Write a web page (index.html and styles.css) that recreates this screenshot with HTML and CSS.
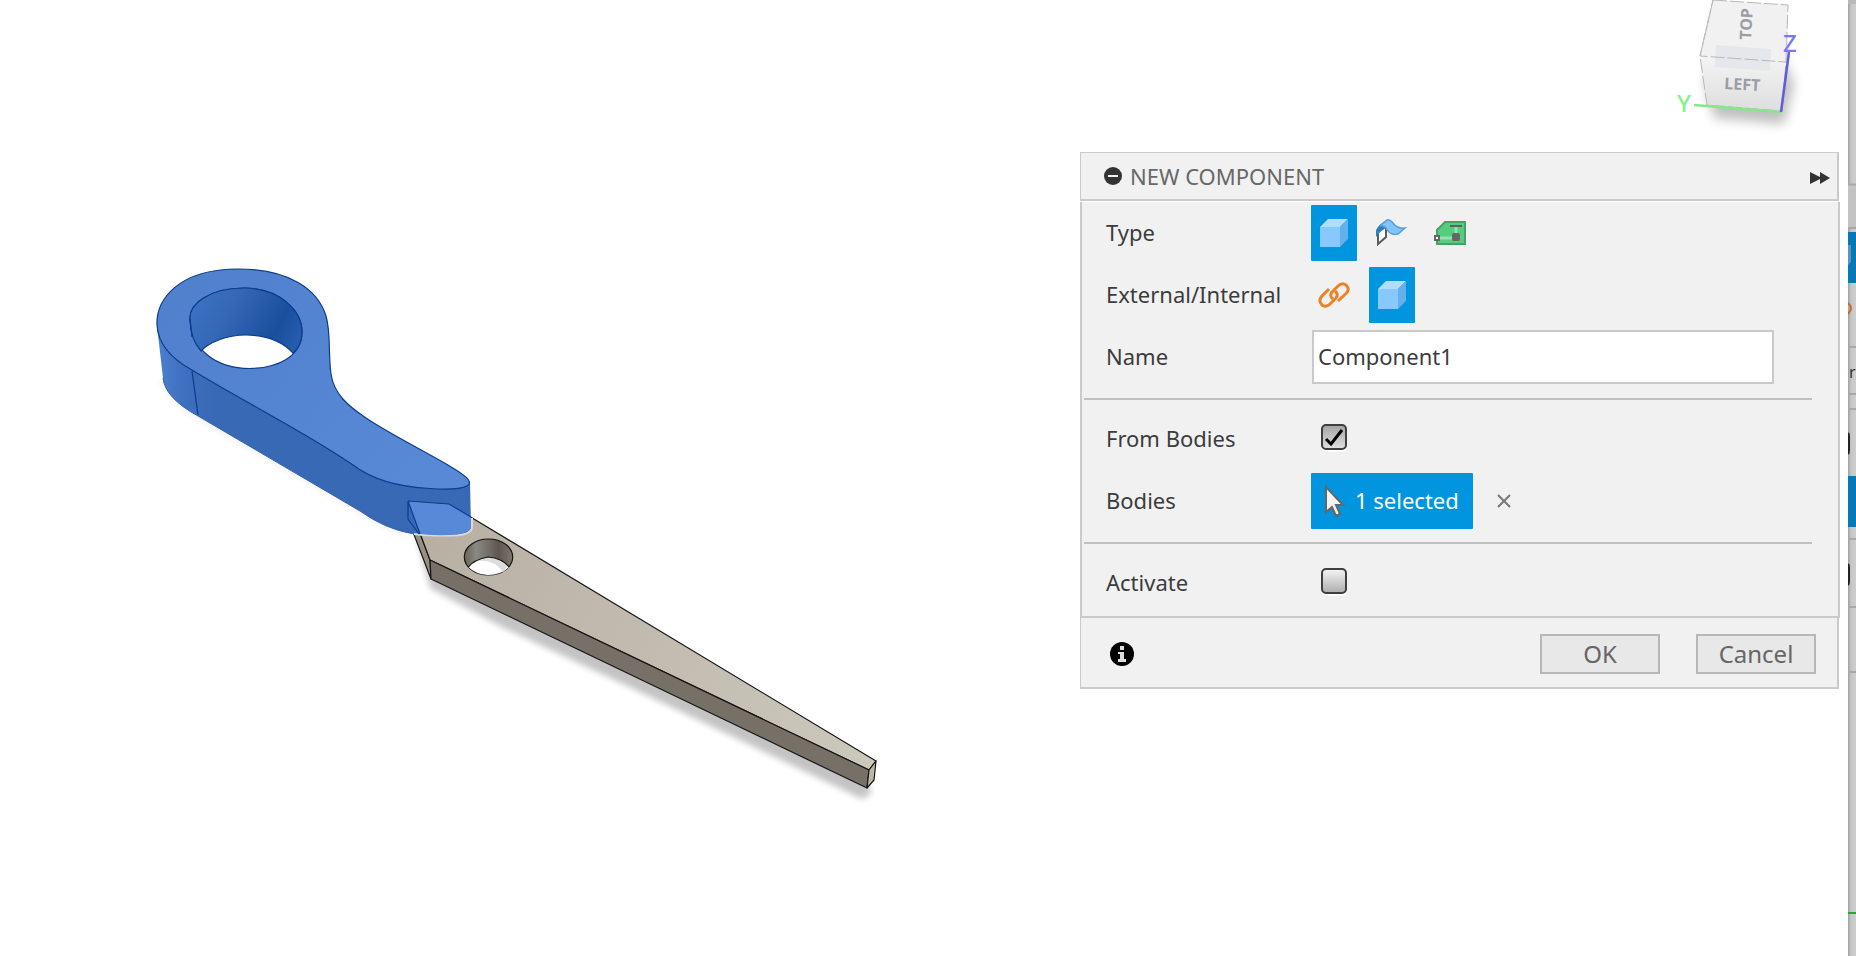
FILE: index.html
```html
<!DOCTYPE html>
<html lang="en">

<head>
    <meta charset="UTF-8">
    <meta name="viewport" content="width=device-width, initial-scale=1.0">
    <title>New Component</title>
    <link rel="stylesheet" href="styles.css">
</head>

<body>

    <!-- shared icon -->
    <svg class="defs" width="0" height="0" aria-hidden="true">
        <symbol id="cube" viewBox="0 0 28 28">
            <path d="M0 8H20V28H0Z" fill="#87c9fd"/>
            <path d="M0 8L8 0H28L20 8Z" fill="#b0deff"/>
            <path d="M20 8L28 0V20L20 28Z" fill="#64b0ea"/>
        </symbol>
    </svg>

    <main class="viewport">
        <!-- scissors half: handle body + blade body -->
        <svg class="model" viewBox="140 250 760 560" role="img" aria-label="Scissors model">
            <defs>
                <filter id="soft" x="-10%" y="-10%" width="120%" height="120%">
                    <feGaussianBlur stdDeviation="3"/>
                </filter>
                <linearGradient id="hole" gradientUnits="userSpaceOnUse" x1="190" y1="290" x2="302" y2="350">
                    <stop offset="0" stop-color="#3d74c4"/>
                    <stop offset=".35" stop-color="#3468b6"/>
                    <stop offset=".75" stop-color="#1a4f9e"/>
                    <stop offset="1" stop-color="#2a60b4"/>
                </linearGradient>
                <linearGradient id="pin" x1="0" y1="0" x2="1" y2="0">
                    <stop offset="0" stop-color="#69645c"/>
                    <stop offset=".25" stop-color="#8a8983"/>
                    <stop offset=".7" stop-color="#5e5750"/>
                    <stop offset="1" stop-color="#7d766c"/>
                </linearGradient>
                <linearGradient id="side" gradientUnits="userSpaceOnUse" x1="157" y1="0" x2="215" y2="0">
                    <stop offset="0" stop-color="#4c80ce"/>
                    <stop offset=".5" stop-color="#3c6fbf"/>
                    <stop offset="1" stop-color="#3869b5"/>
                </linearGradient>
                <linearGradient id="steel" gradientUnits="userSpaceOnUse" x1="420" y1="510" x2="870" y2="770">
                    <stop offset="0" stop-color="#b8afa2"/>
                    <stop offset="1" stop-color="#cbc8bc"/>
                </linearGradient>
                <linearGradient id="top" gradientUnits="userSpaceOnUse" x1="200" y1="270" x2="440" y2="480">
                    <stop offset="0" stop-color="#5181cd"/>
                    <stop offset="1" stop-color="#5889d7"/>
                </linearGradient>
            </defs>

            <path d="M414 528L430 588L500 626L640 692L862 799L872 793L860 770L431 565Z" fill="#000" opacity=".23" filter="url(#soft)"/>
            <path d="M162 380Q172 402 198 417L360 510Q385 528 408 533" fill="none" stroke="#000" stroke-width="3" opacity=".1" filter="url(#soft)"/>

            <g stroke="#161616" stroke-linejoin="round" stroke-width="1.2">
                <path d="M408 501L430 560L431 579L408 519Z" fill="#988f82"/>
                <path d="M408 501L449 504L876 761L869 770L430 560Z" fill="url(#steel)"/>
                <path d="M430 560L869 770L867 788L431 579Z" fill="#767067"/>
                <path d="M869 770L876 761L874 780L867 788Z" fill="#bdb8aa"/>
                <ellipse cx="488.500" cy="557" rx="24.200" ry="18" fill="url(#pin)"/>
            </g>
            <path d="M468.500 567Q473 560 488 557Q502 558 509 567Q501 575 488 575Q475 574 468.500 567Z" fill="#fff"/>
            <path d="M478 561Q494 559 503 572L507 567Q500 557 488 557Z" fill="#ddd"/>
            <path d="M468.500 567Q473 560 488 557Q502 558 509 567" fill="none" stroke="#161616" stroke-width="1.200"/>

            <!-- handle side wall -->
            <path d="M157 326L163 378Q165 398 198 416L360 511Q392 534 430 536Q472 537 471 527L470 482L400 470L330 400L195 362Z" fill="url(#side)"/>
            <path d="M414 534Q430 536 452 535.500Q472 535 472 527V518" fill="none" stroke="#dcdad8" stroke-width="2"/>
            <path d="M408 501L449 504L471 517V527Q471 532 458 534.500Q436 536 420 534Z" fill="#5789d8"/>
            <path d="M419 534L408 519V501L420 534M408 501L449 504L471 517" fill="none" stroke="#0b3c8e" stroke-width="1.200"/>
            <path d="M163 378Q165 398 198 416L360 511Q385 529 412 533.500" fill="none" stroke="#3a62a0" stroke-width="1"/>

            <!-- handle top face with finger hole -->
            <path fill-rule="evenodd" d="M157 325C156 300 178 269 238 269C290 269 318 290 326 316C331 333 328 352 331 374C334 394 348 406 366 418C400 441 466 471 469 481C473 489 449 490 430 488.500C400 487 374 481 353 465C310 435 248 404 192 370C172 359 158 345 157 325Z
                M190 319C189 305 208 288 244 288C280 288 302 311 302 332C302 357 277 368 250 368.500C215 368 192 350 190 319Z" fill="url(#top)" stroke="#0b3c8e" stroke-width="1.200"/>
            <path d="M190 319C189 305 208 288 244 288C280 288 302 311 302 332C302 342 298 349 293 353C280 339 262 335 246 335C226 335 208 343 201 351C193 342 190 331 190 319Z" fill="url(#hole)" stroke="#0b3c8e" stroke-width="1.200"/>
            <path d="M190 319L192 337M192 371L198 415" fill="none" stroke="#0b3c8e" stroke-width="1.200"/>
        </svg>

        <!-- view cube -->
        <svg class="viewcube" viewBox="0 0 160 140" role="img" aria-label="View cube">
            <defs>
                <filter id="glow" x="-30%" y="-30%" width="160%" height="160%">
                    <feGaussianBlur stdDeviation="6"/>
                </filter>
                <linearGradient id="front" x1="0" y1="0" x2="0" y2="1">
                    <stop offset="0" stop-color="#f4f4f4"/>
                    <stop offset="1" stop-color="#dedede"/>
                </linearGradient>
            </defs>
            <path d="M24 76L34 118L104 124L114 84L104 60Z" opacity=".25" filter="url(#glow)"/>
            <path d="M33 0L108 5L106 62L20 56Z" fill="#f1f1f1"/>
            <path d="M20 56L106 62L102 111L27 105Z" fill="url(#front)"/>
            <path d="M36 45L91 49L90 71L35 67Z" fill="#e5e7eb"/>
            <path d="M33 0L108 5L106 62L102 111L27 105L20 56ZM33 0L20 56L106 62" fill="none" stroke="#b8b8b8" stroke-width="1" stroke-dasharray="14 3"/>
            <path d="M14 105L101 112" stroke="#83ea83" stroke-width="2.500"/>
            <path d="M109 52L101 112" stroke="#605cdc" stroke-width="2.500"/>
            <text class="face" transform="translate(44 89) rotate(3)">LEFT</text>
            <text class="face" transform="translate(71 40) rotate(-87)">TOP</text>
            <text class="axis axis-y" x="-3" y="112">Y</text>
            <text class="axis axis-z" x="103" y="52">Z</text>
        </svg>

        <form class="dialog" action="#">
            <header class="dialog-header">
                <svg width="18" height="18" viewBox="0 0 18 18" aria-hidden="true">
                    <circle cx="9" cy="9" r="9" fill="#333"/>
                    <path d="M4 9H14" stroke="#f1f1f1" stroke-width="2"/>
                </svg>
                <h1>NEW COMPONENT</h1>
                <button class="plain expand" type="button" aria-label="Expand">
                    <svg width="20" height="12" viewBox="0 0 20 12"><path d="M0 0L10 5V0L20 6L10 12V7L0 12Z" fill="#333"/></svg>
                </button>
            </header>

            <div class="dialog-body">
                <div class="row">
                    <span class="label">Type</span>
                    <div class="field types">
                        <button class="tile selected" type="button" aria-label="Standard"><svg width="28" height="28"><use href="#cube"/></svg></button>
                        <button class="tile" type="button" aria-label="Sheet metal">
                            <svg width="32" height="28" viewBox="0 0 32 28">
                                <path d="M2 13L10 7V18L2 25Z" fill="#fff" stroke="#5d5d5d" stroke-width="2"/>
                                <path d="M0 18V11Q3 5 11 1L12 8Q6 10 0 18Z" fill="#2d80bf"/>
                                <path d="M4 7L11 1Q14 0 17 4Q21 10 29 9L22 15Q14 17 10 9Q8 6 4 7Z" fill="#80c4fb" stroke="#5a9fd7" stroke-width="1.500"/>
                            </svg>
                        </button>
                        <button class="tile" type="button" aria-label="Electronics">
                            <svg width="32" height="24" viewBox="0 0 32 24">
                                <path d="M3 23V9L11 1H31V23Z" fill="#57cc7e" stroke="#45a365" stroke-width="2"/>
                                <path d="M22 6V14M6 17H18" stroke="#95e0ae" stroke-width="3"/>
                                <path d="M16 5H28" stroke="#5f5f5f" stroke-width="2"/>
                                <rect x="18" y="12" width="8" height="8" rx="2" fill="#666"/>
                                <rect x="1" y="15" width="4" height="4" fill="#fff" stroke="#666" stroke-width="2"/>
                            </svg>
                        </button>
                    </div>
                </div>

                <div class="row">
                    <span class="label">External/Internal</span>
                    <div class="field">
                        <button class="tile" type="button" aria-label="External">
                            <svg width="32" height="26" viewBox="0 0 32 26" fill="none" stroke="#ec8227" stroke-width="3">
                                <path d="M11 7L3.500 14.500Q0 19 4 23Q8 26 12 22L18 16Q21 12 17 9"/>
                                <path d="M20 19L28.500 11Q32 7 28 3Q24 0 20 4L14 10Q11 14 15 17"/>
                            </svg>
                        </button>
                        <button class="tile selected" type="button" aria-label="Internal"><svg width="28" height="28"><use href="#cube"/></svg></button>
                    </div>
                </div>

                <div class="row">
                    <label class="label" for="name">Name</label>
                    <input class="textbox" type="text" name="name" id="name" value="Component1">
                </div>

                <hr>

                <div class="row">
                    <label class="label" for="from-bodies">From Bodies</label>
                    <input class="check" type="checkbox" id="from-bodies" checked>
                </div>

                <div class="row">
                    <span class="label">Bodies</span>
                    <div class="field">
                        <button class="selection" type="button">
                            <svg width="20" height="32" viewBox="0 0 20 32" aria-hidden="true">
                                <path d="M1 2V27L7 22L11 31L15 29L11 20H18Z" fill="#f3f3f3" stroke="#666" stroke-width="2"/>
                            </svg>
                            <span class="label">1 selected</span>
                        </button>
                        <button class="plain clear" type="button" aria-label="Clear selection">
                            <svg width="14" height="14" viewBox="0 0 14 14"><path d="M1 1L13 13M13 1L1 13" stroke="#777" stroke-width="2"/></svg>
                        </button>
                    </div>
                </div>

                <hr>

                <div class="row">
                    <label class="label" for="activate">Activate</label>
                    <input class="check" type="checkbox" id="activate">
                </div>
            </div>

            <footer class="dialog-footer">
                <button class="plain info" type="button" aria-label="Info">
                    <svg width="24" height="24" viewBox="0 0 24 24">
                        <circle cx="12" cy="12" r="12"/>
                        <path d="M10 4H14V8H10ZM8 10H14V17H16V20H8V17H10V12H8Z" fill="#ddd"/>
                    </svg>
                </button>
                <button class="btn" type="submit">OK</button>
                <button class="btn" type="button">Cancel</button>
            </footer>
        </form>
    </main>

    <!-- edge of the window behind -->
    <aside class="behind" aria-hidden="true">
        <svg width="8" height="956" viewBox="0 0 8 956">
            <path d="M0 0H8V4H0Z" fill="#b9b9b9"/>
            <path d="M0 184H8V228H0Z" fill="#c3c3c3"/>
            <path d="M0 184.500H8M0 228H8M0 347H8M0 394H8M0 409H8M0 539H8M0 607H8M0 672H8" stroke="#a8a8a8" stroke-width="2"/>
            <path d="M0 232H8V283H0ZM0 476H8V527H0Z" fill="#0679b5"/>
            <path d="M0 245H3V262L0 265Z" fill="#5b93c4"/>
            <path d="M0 303Q6 308 0 314" fill="none" stroke="#c56a24" stroke-width="2"/>
            <path d="M0 433Q1 434 1 437V450Q1 453 0 454M0 564Q1 565 1 568V581Q1 584 0 585" fill="none" stroke="#222" stroke-width="2"/>
            <text class="behind-text" x="1" y="378">r</text>
            <path d="M0 913H8" stroke="#30a040" stroke-width="2"/>
        </svg>
    </aside>

</body>

</html>
```
FILE: styles.css
```css
* {
    box-sizing: border-box;
}

body {
    margin: 0;
    min-height: 100vh;
    display: flex;
    background-color: white;
    color: #3c3c3c;
    font-family: "Noto Sans", "Open Sans", sans-serif;
    font-size: 22px;
    line-height: 30px;
}

button {
    font: inherit;
    color: inherit;
    padding: 0;
    border: none;
    background: none;
}

svg {
    display: block;
}

.defs {
    position: absolute;
}

/* canvas */
.viewport {
    position: relative;
    flex: 1;
    padding: 250px 0 0 140px;
}

.model {
    width: 760px;
    height: 560px;
}

.viewcube {
    position: absolute;
    top: 0;
    right: 8px;
    width: 160px;
    height: 140px;
    overflow: visible;
}

.face {
    font-size: 16px;
    font-weight: 700;
    fill: #9a9da2;
}

.axis {
    font-size: 24px;
    font-weight: 500;
}

.axis-y {
    fill: #86f286;
}

.axis-z {
    fill: #7b74ff;
}

/* dialog */
.dialog {
    position: absolute;
    top: 152px;
    right: 8px;
    width: 760px;
}

.dialog-header,
.dialog-body,
.dialog-footer {
    background-color: #f1f1f1;
    border: 0 solid #cacaca;
}

.dialog-header {
    display: flex;
    align-items: center;
    gap: 8px;
    height: 49px;
    margin: 0 1px 1px 0;
    padding: 0 7px 0 23px;
    border-width: 1px 2px 2px 1px;
}

h1 {
    margin: 0;
    font-size: 22px;
    font-weight: 400;
    color: #686868;
}

.expand {
    margin-left: auto;
    padding-top: 3px;
}

.dialog-body {
    display: flex;
    flex-direction: column;
    gap: 6px;
    padding: 3px 0 5px;
    border-width: 0 2px 2px;
}

.row {
    display: grid;
    grid-template-columns: 205px 1fr;
    align-items: center;
    min-height: 56px;
    padding: 0 64px 0 24px;
}

.label {
    padding-bottom: 2px;
}

.field {
    display: flex;
    align-items: center;
    gap: 12px;
}

.tile {
    display: flex;
    align-items: center;
    justify-content: center;
    width: 46px;
    height: 56px;
    border-radius: 1px;
}

.selected,
.selection {
    background-color: #0095de;
}

.textbox {
    height: 54px;
    margin-left: 1px;
    padding: 0 4px 2px;
    border: 2px solid #cacaca;
    background-color: white;
    color: inherit;
    font: inherit;
}

.check {
    appearance: none;
    width: 26px;
    height: 26px;
    margin: 0 0 4px 10px;
    border: 2px solid #3f3f3f;
    border-radius: 5px;
    background: linear-gradient(#f2f2f2, #b0b0b0);
    box-shadow: 0 2px 0 white;
}

.check:checked {
    background: url("data:image/svg+xml,%3Csvg xmlns='http://www.w3.org/2000/svg' viewBox='0 0 22 22'%3E%3Cpath d='M3 13L8 18L19 4' fill='none' stroke='black' stroke-width='3'/%3E%3C/svg%3E"), linear-gradient(#a5a5a5, #dedede);
}

hr {
    align-self: stretch;
    height: 2px;
    margin: 7px 26px 5px 2px;
    border: none;
    background-color: #c0c0c0;
}

.selection {
    display: flex;
    align-items: center;
    gap: 10px;
    min-width: 162px;
    height: 56px;
    padding: 0 11px 0 14px;
    border-radius: 1px;
    color: white;
}

.clear {
    margin-left: 12px;
}

.dialog-footer {
    display: flex;
    align-items: center;
    gap: 36px;
    height: 71px;
    margin-right: 1px;
    padding: 2px 21px 0 29px;
    border-width: 0 2px 2px 1px;
}

.info {
    margin-right: auto;
}

.btn {
    width: 120px;
    height: 40px;
    border: 2px solid #b7b7b7;
    background-color: #e8e8e8;
    color: #666;
    font-size: 24px;
    line-height: 36px;
}

/* window behind */
.behind {
    width: 8px;
    overflow: hidden;
    background: linear-gradient(90deg, #a0a0a0, #c6c6c6 3px, #cecece);
}

.behind-text {
    font-size: 16px;
    fill: #333;
}
```
